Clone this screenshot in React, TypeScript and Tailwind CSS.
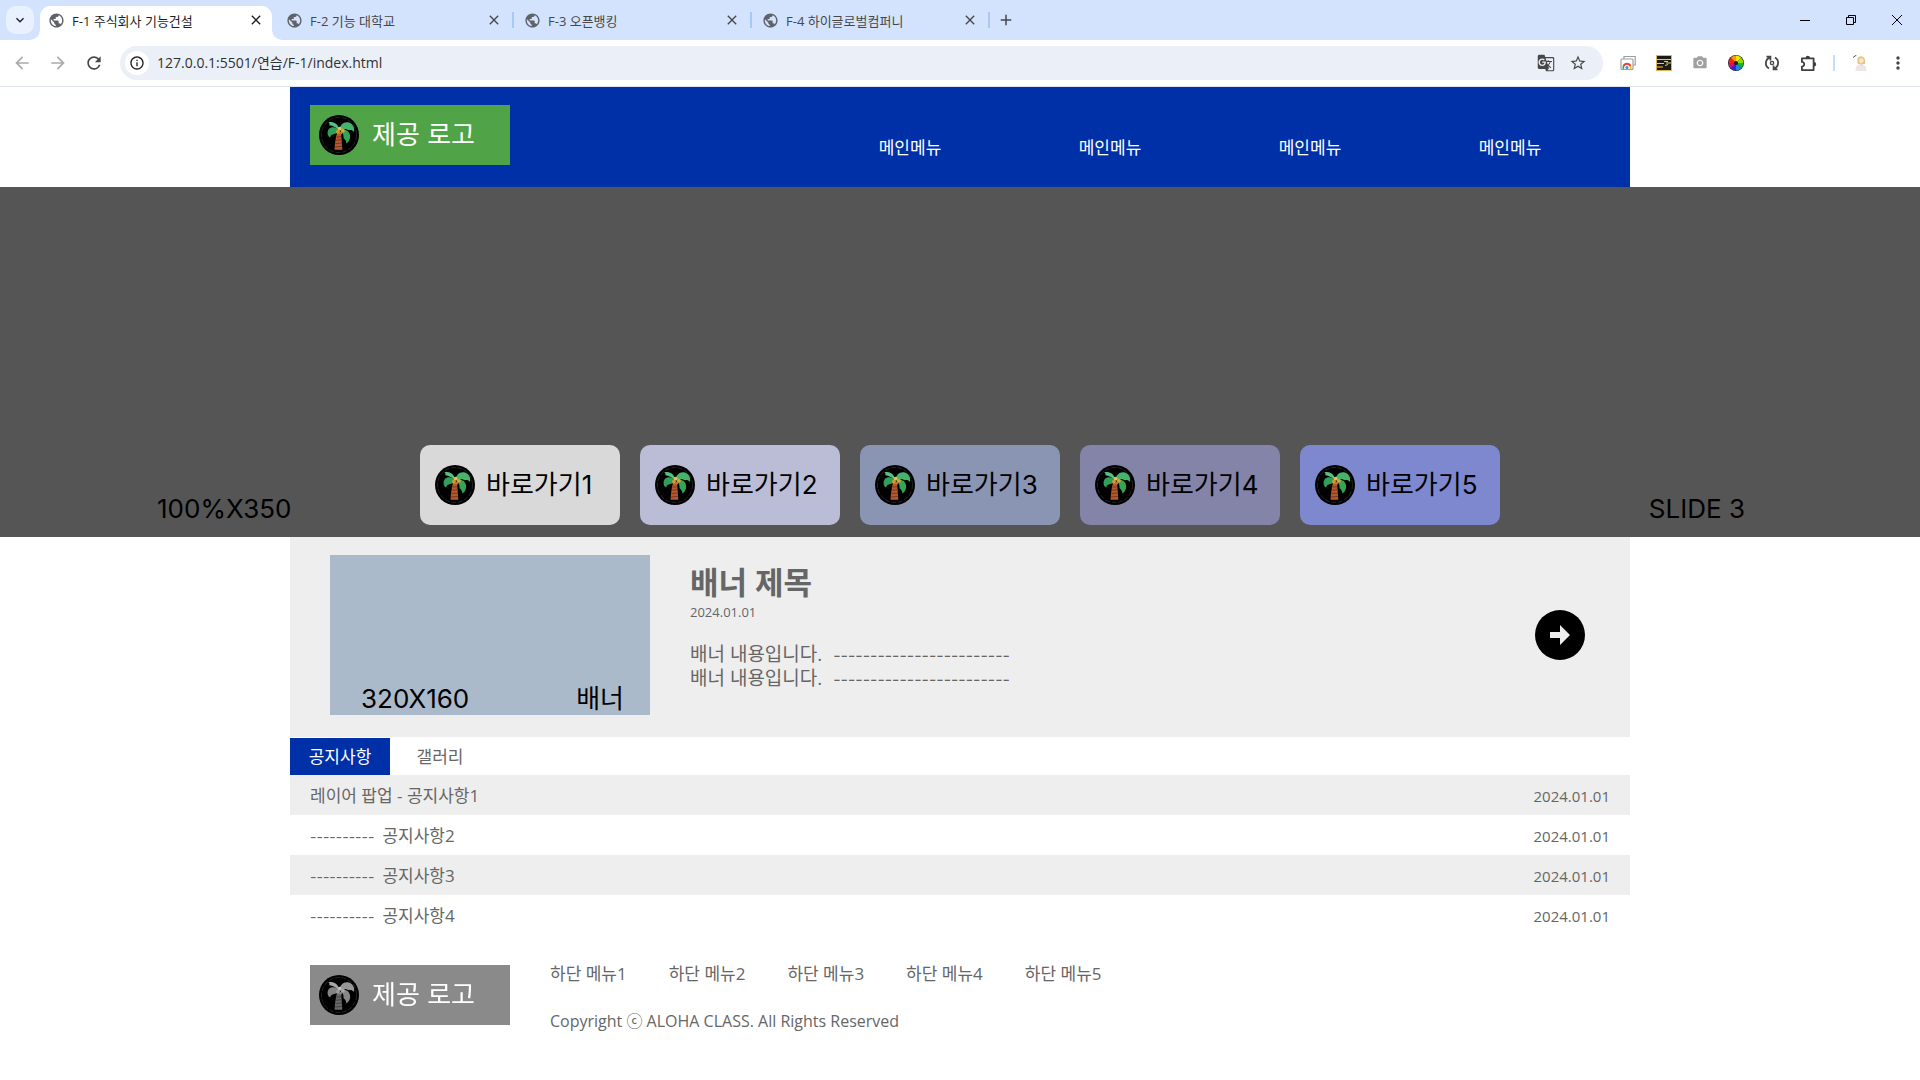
import {
  MdAdd,
  MdArrowBack,
  MdArrowForward,
  MdClose,
  MdGTranslate,
  MdInfoOutline,
  MdKeyboardArrowDown,
  MdMoreVert,
  MdPhotoCamera,
  MdPublic,
  MdRefresh,
  MdStarBorder,
} from "react-icons/md";

const tabs = ["F-1 주식회사 기능건설", "F-2 기능 대학교", "F-3 오픈뱅킹", "F-4 하이글로벌컴퍼니"];
const mainMenus = [1, 2, 3, 4];
const shortcuts = [
  { label: "바로가기1", color: "bg-[#d9d9d9]" },
  { label: "바로가기2", color: "bg-[#babdd5]" },
  { label: "바로가기3", color: "bg-[#8a95b3]" },
  { label: "바로가기4", color: "bg-[#8483a8]" },
  { label: "바로가기5", color: "bg-[#7e88cf]" },
];
const notices = [
  { dashes: "", title: "레이어 팝업 - 공지사항1", date: "2024.01.01" },
  { dashes: "----------", title: "공지사항2", date: "2024.01.01" },
  { dashes: "----------", title: "공지사항3", date: "2024.01.01" },
  { dashes: "----------", title: "공지사항4", date: "2024.01.01" },
];
const footerMenus = ["하단 메뉴1", "하단 메뉴2", "하단 메뉴3", "하단 메뉴4", "하단 메뉴5"];

function Palm() {
  return (
    <svg viewBox="0 0 40 40" className="size-10 shrink-0" aria-hidden="true">
      <circle cx="20" cy="20" r="20" fill="#000" />
      <circle cx="20" cy="20" r="17.5" fill="none" stroke="#4a4a4a" strokeWidth="0.5" strokeDasharray="5 1.5" />
      <path d="M18 18h4c.5 5 .9 10.500 1.300 16.800h-7.800c.4-6 1-11.300 2.500-16.800z" fill="#b4582f" />
      <path d="M17.600 22.200l4.600-.6M17 25.300l5.600-.6M16.500 28.600l6.300-.6M16 32l7-.6" stroke="#6d2f18" strokeWidth="0.800" />
      <path d="M20.500 15.500c-.6-5.500-5.500-10-11.200-8 1.200.5 1.500 1.300 1 2.700 3.600.3 7.200 2.300 10.200 5.300z" fill="#55c184" />
      <path d="M20.500 15c-4.800-4.800-11.500-3.300-11.900 2.400-.2 2.400.8 4.200 2.500 5.100.7-2.400 1.900-3.100 4-3.500 2.600-.5 4.300-1.800 5.400-4z" fill="#2fa05a" />
      <path d="M20.300 15c.4-5 4.900-9 9.600-7.500 4.100 1.300 6 5.500 5.100 9.500-1.700-1.800-3.200-2.200-5-1.700-3.500-1.900-6.500-1.700-9.700-.3z" fill="#46b36d" />
      <path d="M21 14.900c5-1.500 9.400.9 10.100 5.600.5 3.200-1 6.300-3.700 7.900-.2-2.400-1.100-3.900-2.800-5.200.2-3.600-1-6.300-3.600-8.300z" fill="#35a555" />
      <circle cx="19" cy="16.800" r="2" fill="#d6972f" />
      <circle cx="23.800" cy="15.800" r="2" fill="#e0a33b" />
      <circle cx="20.600" cy="13.600" r="1.900" fill="#efbd55" />
      <circle cx="21.800" cy="18" r="1.500" fill="#b97a22" />
    </svg>
  );
}

function Logo({ gray = false }: { gray?: boolean }) {
  return (
    <a
      href="#"
      className={`flex h-[60px] w-[200px] shrink-0 items-center pl-[9px] ${gray ? "bg-[#8a8a8a] grayscale" : "bg-[#50a347]"}`}
    >
      <Palm />
      <span className="ml-[13px] font-['Inter','Noto_Sans_CJK_KR',sans-serif] text-[26px] leading-[40px] text-white">
        제공 로고
      </span>
    </a>
  );
}

function TabStrip() {
  return (
    <div className="flex h-10 items-end bg-[#d3e3fd] text-[#1f1f1f]">
      <button aria-label="탭 검색" className="mb-[6px] ml-[6px] flex size-7 items-center justify-center rounded-[10px] bg-[#e9f1fe]">
        <MdKeyboardArrowDown className="size-4" />
      </button>
      <div className="ml-[6px] flex h-[34px]">
        {tabs.map((tab, i) => (
          <div key={tab} className={`relative flex w-[238px] items-center ${i === 0 ? "" : "text-[#474747]"}`}>
            {i === 0 && (
              <svg className="absolute bottom-0 -left-[10px] h-[34px] w-[252px]" viewBox="0 0 252 34" aria-hidden="true">
                <path d="M0 34A10 10 0 0 0 10 24V10A10 10 0 0 1 20 0H232A10 10 0 0 1 242 10V24A10 10 0 0 0 252 34Z" fill="#fff" />
              </svg>
            )}
            <MdPublic className="relative mb-[11px] ml-2 size-[17px] self-end text-[#5f6368]" />
            <a href="#" className="relative mb-[9px] ml-[7px] flex-1 self-end truncate text-[13px] leading-[20px]">
              {tab}
            </a>
            <button aria-label="탭 닫기" className="relative mb-3 self-end">
              <MdClose className="size-4" />
            </button>
            <span className={`mb-3 ml-[10px] mr-[2px] h-4 w-[2px] self-end ${i === 0 ? "" : "bg-[#a8c7fa]"}`} />
          </div>
        ))}
      </div>
      <button aria-label="새 탭" className="mb-[11px] ml-[5px]">
        <MdAdd className="size-[18px] text-[#474747]" />
      </button>
      <div className="ml-auto flex h-10 items-center">
        <button aria-label="최소화" className="flex h-10 w-[46px] items-center justify-center">
          <svg viewBox="0 0 10 10" className="size-[10px]" aria-hidden="true">
            <path d="M0 5.500h10" stroke="#000" />
          </svg>
        </button>
        <button aria-label="이전 크기로 복원" className="flex h-10 w-[46px] items-center justify-center">
          <svg viewBox="0 0 10 10" className="size-[10px]" fill="none" stroke="#000" aria-hidden="true">
            <path d="M.5 2.500h7v7h-7zM2.500 2.500v-2h7v7h-2" />
          </svg>
        </button>
        <button aria-label="닫기" className="flex h-10 w-[46px] items-center justify-center">
          <svg viewBox="0 0 10 10" className="size-[10px]" aria-hidden="true">
            <path d="M0 0l10 10M10 0L0 10" stroke="#000" />
          </svg>
        </button>
      </div>
    </div>
  );
}

function Extensions() {
  return (
    <div className="ml-[17px] flex items-center gap-5">
      <svg viewBox="0 0 16 16" className="size-4" aria-hidden="true">
        <path d="M4 4V1.500H15.200v8.500H13" fill="#fff" stroke="#9aa0a6" strokeWidth="1.200" />
        <rect x="1" y="4" width="12" height="10.500" rx="1" fill="#fff" stroke="#9aa0a6" strokeWidth="1.200" />
        <path d="M3.600 13.900a3.500 3.500 0 0 1 0-3" fill="none" stroke="#34a853" strokeWidth="1.800" />
        <path d="M3.600 11a3.700 3.700 0 0 1 6.800 0" fill="none" stroke="#ea4335" strokeWidth="2" />
        <path d="M10.400 11a3.500 3.500 0 0 1 0 2.900" fill="none" stroke="#fbbc04" strokeWidth="1.800" />
        <circle cx="7" cy="12.600" r="1.500" fill="#4285f4" />
      </svg>
      <svg viewBox="0 0 16 16" className="size-4" aria-hidden="true">
        <rect x=".5" y=".5" width="15" height="15" fill="#1d1a14" stroke="#e2b456" />
        <path d="M1 4.500h14M1 8.500h7M10 8h5M1 12h6" stroke="#edc46d" strokeWidth="1.200" />
        <path d="M8 6.500h4M9 10.500l3-1" stroke="#edc46d" />
      </svg>
      <MdPhotoCamera className="size-4 text-[#a0a0a0]" />
      <svg viewBox="0 0 16 16" className="size-4" aria-hidden="true">
        <circle cx="8" cy="8" r="8" fill="#222" />
        <path d="M8 8V.6A7.400 7.400 0 0 1 13.200 2.800z" fill="#f5e800" />
        <path d="M8 8l5.200-5.200A7.400 7.400 0 0 1 15.400 8z" fill="#8be000" />
        <path d="M8 8h7.400a7.400 7.400 0 0 1-2.200 5.200z" fill="#12b53c" />
        <path d="M8 8l5.200 5.200A7.400 7.400 0 0 1 8 15.400z" fill="#1587f0" />
        <path d="M8 8v7.400a7.400 7.400 0 0 1-5.200-2.200z" fill="#3a22df" />
        <path d="M8 8l-5.200 5.200A7.400 7.400 0 0 1 .6 8z" fill="#d31078" />
        <path d="M8 8H.6a7.400 7.400 0 0 1 2.200-5.200z" fill="#f0221c" />
        <path d="M8 8L2.800 2.800A7.400 7.400 0 0 1 8 .6z" fill="#ff9400" />
        <circle cx="8" cy="8" r="2" fill="#1b1b1b" />
      </svg>
      <svg viewBox="0 0 16 16" className="size-4" fill="none" stroke="#474747" strokeWidth="1.800" aria-hidden="true">
        <path d="M6 2.300A6.200 6.200 0 0 0 5 13.500M2.500 1.600h3.900v4" />
        <path d="M10 13.700A6.200 6.200 0 0 0 11 2.500M13.500 14.400H9.600v-4" />
        <circle cx="8" cy="8" r="1.600" strokeWidth="1.400" />
      </svg>
      <svg viewBox="0 0 17 17" className="size-[17px]" aria-hidden="true">
        <path
          d="M1.900 3.400H13.600V15.100H1.900V11.600a2.300 2.300 0 0 0 0-4.700z"
          fill="none"
          stroke="#3c4043"
          strokeWidth="1.800"
          strokeLinejoin="round"
        />
        <path d="M5.600 3a2.200 2.200 0 0 1 4.400 0zM14 7a2.200 2.200 0 0 1 0 4.400z" fill="#3c4043" />
      </svg>
    </div>
  );
}

function Toolbar() {
  return (
    <div className="flex h-[47px] items-center border-b border-[#dde3e8] bg-white pr-3 text-[#474747]">
      <div className="ml-3 flex gap-4">
        <button aria-label="뒤로">
          <MdArrowBack className="size-5 text-[#ababab]" />
        </button>
        <button aria-label="앞으로">
          <MdArrowForward className="size-5 text-[#ababab]" />
        </button>
        <button aria-label="새로고침">
          <MdRefresh className="size-5" />
        </button>
      </div>
      <div className="ml-4 flex h-[34px] flex-1 items-center rounded-full bg-[#ebf0f8] pr-4">
        <button aria-label="사이트 정보" className="ml-[5px] flex size-6 items-center justify-center rounded-full bg-white">
          <MdInfoOutline className="size-4 text-[#1f1f1f]" />
        </button>
        <input
          aria-label="주소"
          defaultValue="127.0.0.1:5501/연습/F-1/index.html"
          className="mb-[2px] ml-2 h-6 flex-1 bg-transparent text-[14px] text-[#303134] outline-none"
        />
        <button aria-label="번역" className="mr-[14px]">
          <MdGTranslate className="size-[18px]" />
        </button>
        <button aria-label="북마크">
          <MdStarBorder className="size-[18px]" />
        </button>
      </div>
      <Extensions />
      <span className="ml-4 h-4 w-[2px] bg-[#c7dbfb]" />
      <button aria-label="프로필" className="ml-[18px]">
        <svg viewBox="0 0 16 16" className="size-4" aria-hidden="true">
          <path d="M0 2.500L3.500 0" stroke="#555" />
          <path d="M5 9C3 4 5 1.200 8 1.200S12.800 4 12 9z" fill="#e6c67e" />
          <circle cx="8.300" cy="5.600" r="2.400" fill="#fbe3d3" />
          <path d="M2.500 16c0-5 2.500-7 5.500-7s5.500 2 5.500 7z" fill="#eee6e6" />
          <path d="M7 8.500h2.500L8.300 12z" fill="#f3cfc0" />
        </svg>
      </button>
      <button aria-label="메뉴" className="ml-[19px]">
        <MdMoreVert className="size-5" />
      </button>
    </div>
  );
}

function Slide() {
  return (
    <section className="grid h-[350px] grid-cols-[1fr_auto_1fr] items-end bg-[#555] font-['Inter','Noto_Sans_CJK_KR',sans-serif] text-[26px] leading-[40px] text-black">
      <p className="mb-2 pl-[157px]">100%X350</p>
      <ul className="mb-3 flex gap-5">
        {shortcuts.map((s) => (
          <li key={s.label}>
            <a href="#" className={`flex h-20 w-[200px] items-center rounded-[10px] pl-[15px] ${s.color}`}>
              <Palm />
              <span className="ml-[11px] whitespace-nowrap">{s.label}</span>
            </a>
          </li>
        ))}
      </ul>
      <p className="mb-2 pr-[175px] text-right">SLIDE 3</p>
    </section>
  );
}

function Banner() {
  const dashes = "------------------------";
  return (
    <section className="flex h-[200px] bg-[#eee] px-10 pt-[18px]">
      <div className="flex h-40 w-80 items-end justify-between bg-[#abbaca] pl-[31px] pr-[26px] font-['Inter','Noto_Sans_CJK_KR',sans-serif] text-[26px] leading-[32px] text-black">
        <span>320X160</span>
        <span>배너</span>
      </div>
      <div className="ml-10 flex-1">
        <h2 className="mt-[7px] text-[31px] font-bold leading-[40px]">배너 제목</h2>
        <p className="text-[13px] leading-[20px]">2024.01.01</p>
        <p className="mt-5 text-[19px] leading-[24px]">
          배너 내용입니다. <span className="ml-[6px] font-['Inter'] text-[16px] leading-[16px]">{dashes}</span>
          <br />
          배너 내용입니다. <span className="ml-[6px] font-['Inter'] text-[16px] leading-[16px]">{dashes}</span>
        </p>
      </div>
      <a href="#" aria-label="배너 바로가기" className="mr-[5px] mt-[55px]">
        <svg viewBox="0 0 50 50" className="size-[50px]" aria-hidden="true">
          <circle cx="25" cy="25" r="25" fill="#000" />
          <path d="M15 22h10v-7l10 10-10 10v-7H15z" fill="#eee" />
        </svg>
      </a>
    </section>
  );
}

export default function App() {
  return (
    <div className="min-h-screen bg-white font-['Open_Sans','Noto_Sans_CJK_KR',sans-serif]">
      <TabStrip />
      <Toolbar />
      <div className="text-[17px] text-[#666]">
        <header className="mx-[290px] flex h-[100px] justify-between bg-[#0030a8] px-5 pt-[18px]">
          <Logo />
          <nav className="mt-[30px] flex text-white">
            {mainMenus.map((m) => (
              <a key={m} href="#" className="w-[200px] text-center leading-[26px]">
                메인메뉴
              </a>
            ))}
          </nav>
        </header>
        <Slide />
        <main className="mx-[290px]">
          <Banner />
          <div className="mt-px flex">
            <button className="h-[37px] w-[100px] bg-[#0030a8] text-white">공지사항</button>
            <button className="h-[37px] w-[100px]">갤러리</button>
          </div>
          <ul>
            {notices.map((n) => (
              <li key={n.title} className="flex h-10 items-center justify-between px-5 pt-[2px] odd:bg-[#eee]">
                <a href="#">
                  {n.dashes && <span className="mr-2 font-['Inter'] text-[14px]">{n.dashes}</span>}
                  {n.title}
                </a>
                <span className="text-[15px]">{n.date}</span>
              </li>
            ))}
          </ul>
        </main>
        <footer className="mx-[290px] flex px-5 pt-[30px]">
          <Logo gray />
          <div className="ml-10">
            <ul className="flex gap-[42px] leading-[18px]">
              {footerMenus.map((m) => (
                <li key={m}>
                  <a href="#">{m}</a>
                </li>
              ))}
            </ul>
            <p className="mt-7 text-[16px] leading-[20px]">Copyright ⓒ ALOHA CLASS. All Rights Reserved</p>
          </div>
        </footer>
      </div>
    </div>
  );
}
